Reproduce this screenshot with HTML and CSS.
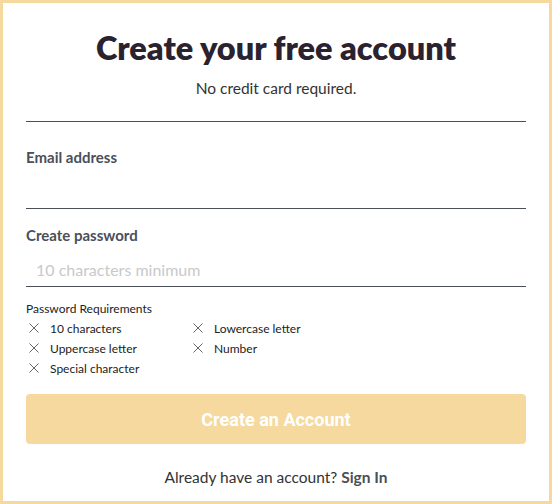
FILE: index.html
```html
<!DOCTYPE html>
<html lang="en">
<head>
<meta charset="utf-8">
<title>Create your free account</title>
<link rel="stylesheet" href="styles.css">
</head>
<body>
<div class="card">
  <h1 class="title">Create your free account</h1>
  <p class="subtitle">No credit card required.</p>
  <hr class="divider">
  <label class="label" for="email">Email address</label>
  <input class="field" id="email" type="email">
  <label class="label label-pw" for="pw">Create password</label>
  <input class="field" id="pw" type="password" placeholder="10 characters minimum">
  <div class="reqs">
    <div class="reqs-title">Password Requirements</div>
    <ul class="reqs-grid">
      <li class="req"><svg class="x" viewBox="0 0 10 10"><path d="M0.5 0.5L9.5 9.5M9.5 0.5L0.5 9.5"/></svg>10 characters</li>
      <li class="req"><svg class="x" viewBox="0 0 10 10"><path d="M0.5 0.5L9.5 9.5M9.5 0.5L0.5 9.5"/></svg>Lowercase letter</li>
      <li class="req"><svg class="x" viewBox="0 0 10 10"><path d="M0.5 0.5L9.5 9.5M9.5 0.5L0.5 9.5"/></svg>Uppercase letter</li>
      <li class="req"><svg class="x" viewBox="0 0 10 10"><path d="M0.5 0.5L9.5 9.5M9.5 0.5L0.5 9.5"/></svg>Number</li>
      <li class="req"><svg class="x" viewBox="0 0 10 10"><path d="M0.5 0.5L9.5 9.5M9.5 0.5L0.5 9.5"/></svg>Special character</li>
    </ul>
  </div>
  <button class="btn" type="button">Create an Account</button>
  <p class="footer">Already have an account? <a class="signin" href="#">Sign In</a></p>
</div>
</body>
</html>
```

FILE: styles.css
```css
* { box-sizing: border-box; }
html, body { margin: 0; padding: 0; background: #fff; }
.card {
  width: 552px;
  height: 504px;
  border: 3px solid #f5d99f;
  padding: 0 23px;
  display: flex;
  flex-direction: column;
  font-family: "Lato", "Liberation Sans", sans-serif;
}
.title {
  margin: 27px 0 0;
  font-size: 32.5px;
  line-height: 36px;
  font-weight: 800;
  color: #2b2230;
  text-align: center;
}
.subtitle {
  margin: 12px 0 0;
  font-size: 15.5px;
  line-height: 20px;
  color: #333;
  text-align: center;
}
.divider {
  margin: 23px 0 0;
  border: 0;
  border-top: 1px solid #4a4f5a;
  height: 0;
}
.label {
  display: block;
  margin-top: 25px;
  font-size: 15px;
  line-height: 20px;
  font-weight: 700;
  color: #4a4f5a;
}
.label-pw { margin-top: 16px; }
.field {
  display: block;
  width: 100%;
  height: 42px;
  margin: 0;
  padding: 8px 10px 0;
  border: 0;
  border-bottom: 1px solid #4a4f5a;
  outline: none;
  font-family: inherit;
  font-size: 16px;
  color: #333;
  background: transparent;
}
.field::placeholder { color: #c9c9c9; }
.reqs {
  margin-top: 14px;
  font-family: "Lato", "Liberation Sans", sans-serif;
  color: #222;
}
.reqs-title {
  font-size: 12px;
  line-height: 16px;
}
.reqs-grid {
  list-style: none;
  margin: 1px 0 0;
  padding: 0;
  display: grid;
  grid-template-columns: 164px 1fr;
}
.req {
  display: flex;
  align-items: center;
  height: 20px;
  font-size: 12px;
}
.x {
  width: 10px;
  height: 10px;
  margin: 0 11px 0 3px;
  fill: none;
  stroke: #666;
  stroke-width: 1;
}
.btn {
  margin-top: 16px;
  height: 50px;
  width: 100%;
  padding: 0;
  border: 0;
  border-radius: 4px;
  background: #f5d99f;
  color: #fff;
  font-family: "Roboto", "Liberation Sans", sans-serif;
  font-weight: 700;
  font-size: 18px;
}
.footer {
  margin: 23px 0 0;
  font-size: 15.5px;
  line-height: 20px;
  color: #333;
  text-align: center;
}
.signin {
  color: #4a4f5a;
  font-weight: 700;
  text-decoration: none;
}
```
